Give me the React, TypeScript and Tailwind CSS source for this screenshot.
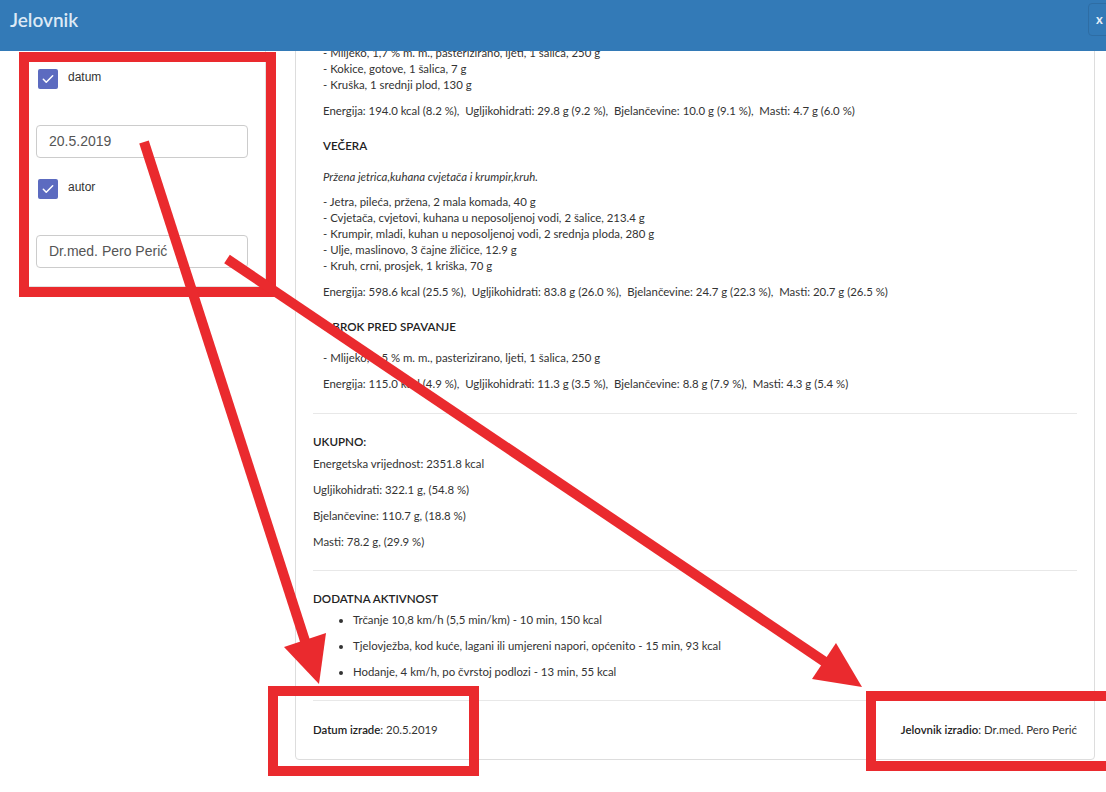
import React from "react";

const meals = [
  {
    title: null as string | null,
    note: null as string | null,
    items: [
      "Mlijeko, 1,7 % m. m., pasterizirano, ljeti, 1 šalica, 250 g",
      "Kokice, gotove, 1 šalica, 7 g",
      "Kruška, 1 srednji plod, 130 g",
    ],
    energy:
      "Energija: 194.0 kcal (8.2 %),  Ugljikohidrati: 29.8 g (9.2 %),  Bjelančevine: 10.0 g (9.1 %),  Masti: 4.7 g (6.0 %)",
  },
  {
    title: "VEČERA",
    note: "Pržena jetrica,kuhana cvjetača i krumpir,kruh.",
    items: [
      "Jetra, pileća, pržena, 2 mala komada, 40 g",
      "Cvjetača, cvjetovi, kuhana u neposoljenoj vodi, 2 šalice, 213.4 g",
      "Krumpir, mladi, kuhan u neposoljenoj vodi, 2 srednja ploda, 280 g",
      "Ulje, maslinovo, 3 čajne žličice, 12.9 g",
      "Kruh, crni, prosjek, 1 kriška, 70 g",
    ],
    energy:
      "Energija: 598.6 kcal (25.5 %),  Ugljikohidrati: 83.8 g (26.0 %),  Bjelančevine: 24.7 g (22.3 %),  Masti: 20.7 g (26.5 %)",
  },
  {
    title: "OBROK PRED SPAVANJE",
    note: null,
    items: ["Mlijeko, 1,5 % m. m., pasterizirano, ljeti, 1 šalica, 250 g"],
    energy:
      "Energija: 115.0 kcal (4.9 %),  Ugljikohidrati: 11.3 g (3.5 %),  Bjelančevine: 8.8 g (7.9 %),  Masti: 4.3 g (5.4 %)",
  },
];

const totals = [
  "Ugljikohidrati: 322.1 g, (54.8 %)",
  "Bjelančevine: 110.7 g, (18.8 %)",
  "Masti: 78.2 g, (29.9 %)",
];

const activities = [
  "Trčanje 10,8 km/h (5,5 min/km) - 10 min, 150 kcal",
  "Tjelovježba, kod kuće, lagani ili umjereni napori, općenito - 15 min, 93 kcal",
  "Hodanje, 4 km/h, po čvrstoj podlozi - 13 min, 55 kcal",
];

const Check = ({ label }: { label: string }) => (
  <label className="ml-[2px] flex items-start gap-[10px]">
    <span className="flex h-[20px] w-[20px] items-center justify-center rounded-[2px] bg-[#5c6bc0]">
      <svg width="14" height="14" viewBox="0 0 24 24" fill="none" stroke="white" strokeWidth="2.6" strokeLinecap="round" strokeLinejoin="round">
        <path d="M4 12.5l5 5L20 6.5" />
      </svg>
    </span>
    <span className="font-['Liberation_Sans',Arial,sans-serif] text-[12px] leading-[16px] text-[#333]">{label}</span>
  </label>
);

const Field = ({ value }: { value: string }) => (
  <div className="flex h-[33px] w-[212px] items-center rounded-[4px] border border-[#ccc] px-[12px] font-['Liberation_Sans',Arial,sans-serif] text-[14px] text-[#555]">
    {value}
  </div>
);

export default function App() {
  return (
    <div className="relative h-[792px] w-[1106px] overflow-hidden bg-white font-['Lato',sans-serif] text-[#333]">
      <header className="relative z-10 flex h-[51px] items-start justify-between bg-[#337ab7] pl-[10px]">
        <h1 className="pt-[8px] text-[19px] font-semibold leading-[24px] text-[#dde9f5]">Jelovnik</h1>
        <button className="mr-[-13px] mt-[3px] flex h-[33px] w-[31px] items-center justify-center rounded-[4px] border border-[#2e6da4] pr-[8px] text-[13px] font-bold text-[#e6eef7]">
          x
        </button>
      </header>

      <div className="flex">
        <div className="w-[295px] shrink-0 pl-[19px]">
          <div className="w-[247px] rounded-b-[4px] border-r border-b border-[#e2e2e2] pl-[17px] pr-[17px] pt-[18px] pb-[18px]">
            <Check label="datum" />
            <div className="mt-[36px]">
              <Field value="20.5.2019" />
            </div>
            <div className="mt-[21px]">
              <Check label="autor" />
            </div>
            <div className="mt-[36px]">
              <Field value="Dr.med. Pero Perić" />
            </div>
          </div>
        </div>

        <div className="-mt-[30px] w-[800px] shrink-0 rounded-[4px] border border-[#ddd] px-[17px] pt-[23px] text-[11.4px] leading-[16px]">
          <div className="flex flex-col gap-[19px] pb-[21px] pl-[10px]">
            {meals.map((m, i) => (
              <div key={i}>
                {m.title && <div className="mb-[15px] text-[11.6px] font-semibold text-[#222]">{m.title}</div>}
                {m.note && <p className="mb-[9px] italic">{m.note}</p>}
                <div className="mb-[10px]">
                  {m.items.map((it) => (
                    <div key={it}>- {it}</div>
                  ))}
                </div>
                <p className="whitespace-pre">{m.energy}</p>
              </div>
            ))}
          </div>

          <div className="border-t border-[#e8e8e8] py-[20px]">
            <div className="mb-[6px] text-[11.6px] font-semibold text-[#222]">UKUPNO:</div>
            <p className="mb-[10px]">Energetska vrijednost: 2351.8 kcal</p>
            {totals.map((t, i) => (
              <p key={t} className={i < totals.length - 1 ? "mb-[10px]" : ""}>
                {t}
              </p>
            ))}
          </div>

          <div className="border-t border-[#e8e8e8] py-[20px]">
            <div className="mb-[5px] text-[11.6px] font-semibold text-[#222]">DODATNA AKTIVNOST</div>
            <ul className="flex list-disc flex-col gap-[10px] pl-[40px]">
              {activities.map((a) => (
                <li key={a}>{a}</li>
              ))}
            </ul>
          </div>

          <div className="flex justify-between border-t border-[#e8e8e8] pt-[21px] pb-[21px]">
            <span>
              <span className="font-semibold text-[#222]">Datum izrade</span>: 20.5.2019
            </span>
            <span>
              <span className="font-semibold text-[#222]">Jelovnik izradio</span>: Dr.med. Pero Perić
            </span>
          </div>
        </div>
      </div>

      <svg className="pointer-events-none absolute inset-0 z-20" width="1106" height="792" viewBox="0 0 1106 792">
        <g fill="none" stroke="#ea2a2e" strokeWidth="10">
          <rect x="24" y="57" width="247" height="235" />
          <rect x="273" y="691" width="201" height="80" />
          <rect x="871" y="696" width="250" height="70" />
          <line x1="144" y1="142" x2="306" y2="644" />
          <line x1="227" y1="259" x2="828" y2="664" />
        </g>
        <g fill="#ea2a2e">
          <polygon points="319,684 326,633 284,647" />
          <polygon points="862,687 836,643 812,679" />
        </g>
      </svg>
    </div>
  );
}
